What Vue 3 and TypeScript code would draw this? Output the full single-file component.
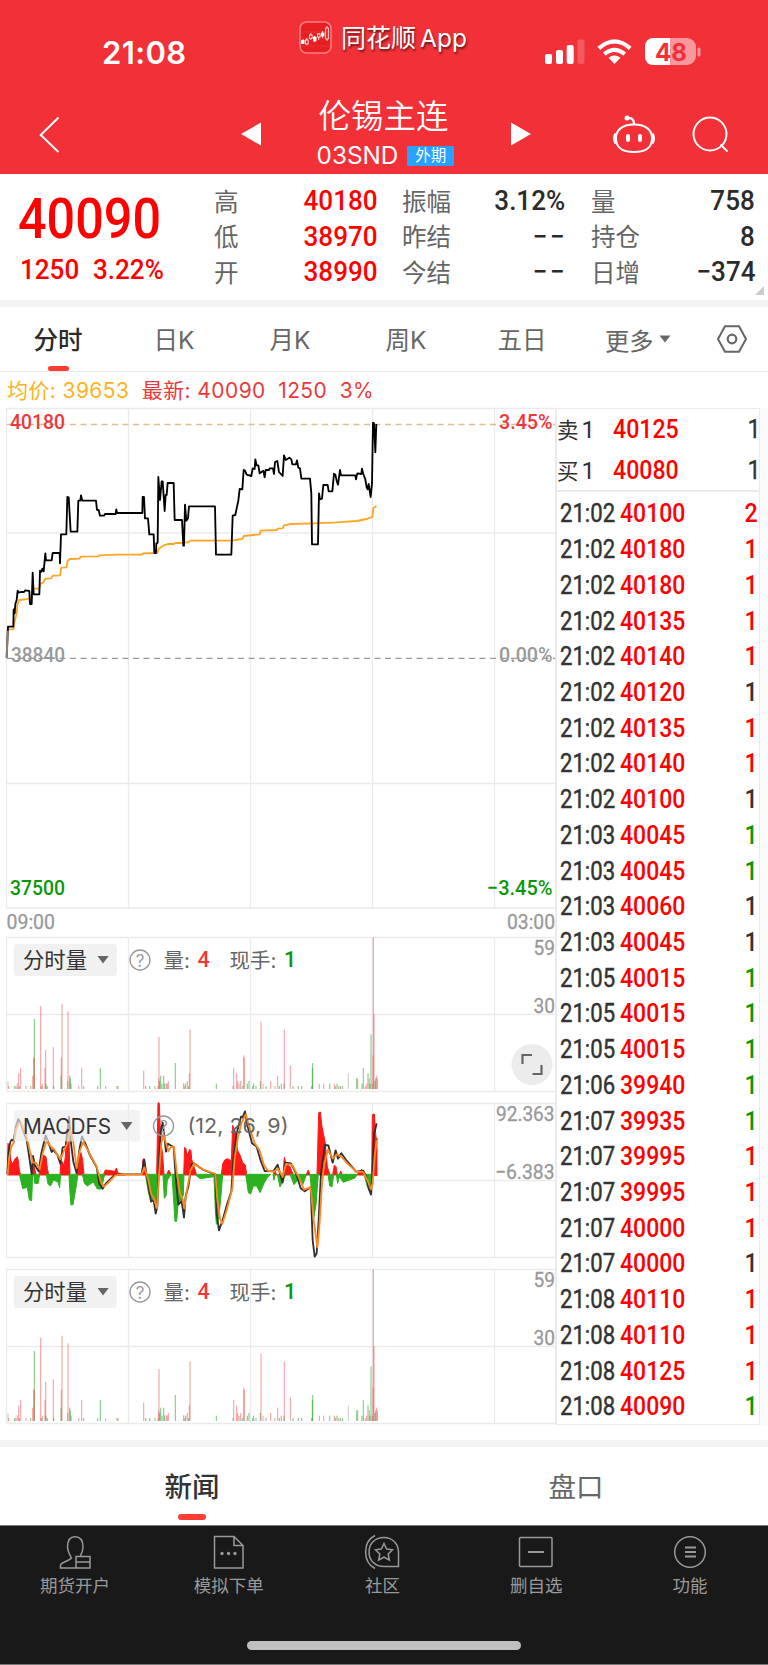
<script setup lang="ts">
interface Stat { label: string; value: string; up?: boolean }
interface Tick { time: string; price: number; qty: number; dir: 'up' | 'down' | 'flat' }
type Bar = [number, number, 'r' | 'g' | 'n']

const statColumns: Stat[][] = [
  [{ label: '高', value: '40180', up: true }, { label: '低', value: '38970', up: true }, { label: '开', value: '38990', up: true }],
  [{ label: '振幅', value: '3.12%' }, { label: '昨结', value: '−−' }, { label: '今结', value: '−−' }],
  [{ label: '量', value: '758' }, { label: '持仓', value: '8' }, { label: '日增', value: '−374' }],
]

const periods = ['分时', '日K', '月K', '周K', '五日']

const t = (time: string, price: number, dir: Tick['dir'], qty = 1): Tick => ({ time, price, qty, dir })
const ticks: Tick[] = [
  t('21:02', 40100, 'up', 2), t('21:02', 40180, 'up'), t('21:02', 40180, 'up'), t('21:02', 40135, 'up'),
  t('21:02', 40140, 'up'), t('21:02', 40120, 'flat'), t('21:02', 40135, 'up'), t('21:02', 40140, 'up'),
  t('21:02', 40100, 'flat'), t('21:03', 40045, 'down'), t('21:03', 40045, 'down'), t('21:03', 40060, 'flat'),
  t('21:03', 40045, 'flat'), t('21:05', 40015, 'down'), t('21:05', 40015, 'down'), t('21:05', 40015, 'down'),
  t('21:06', 39940, 'down'), t('21:07', 39935, 'down'), t('21:07', 39995, 'up'), t('21:07', 39995, 'up'),
  t('21:07', 40000, 'up'), t('21:07', 40000, 'flat'), t('21:08', 40110, 'up'), t('21:08', 40110, 'up'),
  t('21:08', 40125, 'up'), t('21:08', 40090, 'down'),
]

const gridX = [128.5, 250.5, 372.5, 494.5]

const priceLine = '20,772 24,680 40,680 41,628 44,640 46,612 50,600 53,572 56,578 62,576 72,576 76,571 88,573 90,612 95,612 98,518 101,583 118,583 120,512 124,515 127,506 131,514 136,460 138,481 155,481 158,459 179,459 180,490 183,403 199,403 202,291 206,292 212,395 232,395 235,302 241,302 243,286 247,302 288,302 291,330 296,330 300,347 312,347 315,342 347,342 349,328 351,339 427,339 428,291 432,291 435,355 444,355 448,403 461,403 463,459 468,459 469,430 473,428 475,231 480,300 485,244 488,244 494,333 497,285 500,285 503,249 521,249 524,360 546,360 550,437 552,437 555,314 559,362 564,355 567,319 645,319 648,464 694,464 698,347 706,345 710,325 715,302 719,267 727,268 731,210 735,212 740,224 754,228 758,205 764,207 766,178 770,196 775,196 779,220 790,212 794,232 797,210 807,210 809,205 819,205 822,222 825,186 832,183 837,216 848,228 852,166 857,180 868,173 874,178 877,193 888,193 891,181 895,203 900,205 904,236 930,236 934,280 936,433 954,433 957,280 960,298 966,296 970,255 983,255 986,274 997,274 1002,221 1006,224 1010,242 1014,254 1020,210 1023,226 1066,226 1068,238 1072,220 1084,222 1086,206 1090,222 1096,238 1100,262 1103,268 1106,252 1112,291 1116,250 1119,68 1122,70 1126,157 1129,72'
const avgLine = '24,688 40,688 44,665 50,640 52,615 58,600 92,596 100,566 118,566 122,551 130,548 136,536 154,535 158,527 180,526 184,503 199,502 203,482 210,477 238,476 243,470 295,469 300,466 350,464 425,464 430,460 472,459 476,446 492,436 505,432 522,432 526,429 550,429 553,427 565,427 570,422 695,422 727,417 731,408 779,403 782,392 830,390 834,386 848,385 852,376 872,372 940,370 1010,367 1070,363 1100,357 1114,352 1117,350 1120,324 1129,318'

const bars: Bar[] = [
  [24, 633, 'n'], [26, 648, 'r'], [44, 648, 'g'], [48, 648, 'r'], [52, 640, 'r'], [56, 610, 'r'], [58, 648, 'g'], [62, 594, 'r'],
  [78, 648, 'r'], [92, 648, 'g'], [98, 617, 'r'], [101, 563, 'r'], [103, 447, 'g'], [103, 563, 'r'], [122, 408, 'r'], [124, 648, 'g'],
  [127, 641, 'r'], [135, 594, 'r'], [137, 540, 'r'], [138, 641, 'g'], [142, 648, 'g'], [160, 532, 'r'], [161, 648, 'g'],
  [183, 617, 'g'], [184, 563, 'r'], [186, 401, 'r'], [203, 633, 'r'], [204, 424, 'r'], [209, 617, 'g'], [211, 625, 'g'], [213, 641, 'g'],
  [236, 648, 'r'], [245, 594, 'r'], [251, 648, 'g'], [293, 648, 'g'], [301, 594, 'g'], [317, 648, 'r'], [351, 648, 'g'], [354, 648, 'r'],
  [431, 602, 'r'], [437, 648, 'g'], [449, 648, 'g'], [465, 648, 'g'], [474, 648, 'r'], [476, 625, 'r'], [477, 501, 'r'], [479, 633, 'g'],
  [482, 617, 'g'], [486, 641, 'g'], [491, 617, 'g'], [494, 640, 'g'], [499, 641, 'r'], [502, 640, 'r'], [505, 633, 'r'], [526, 579, 'g'],
  [551, 640, 'g'], [554, 648, 'r'], [557, 641, 'g'], [562, 633, 'r'], [566, 648, 'g'], [568, 610, 'r'], [570, 478, 'r'],
  [649, 641, 'g'], [699, 648, 'r'], [701, 594, 'r'], [710, 610, 'r'], [713, 633, 'r'], [717, 641, 'r'], [722, 633, 'r'], [727, 648, 'g'],
  [731, 556, 'r'], [733, 563, 'r'], [742, 641, 'g'], [747, 633, 'g'], [758, 648, 'g'], [761, 641, 'g'], [768, 648, 'g'], [781, 633, 'g'],
  [783, 455, 'r'], [789, 641, 'r'], [798, 648, 'g'], [812, 633, 'r'], [825, 648, 'r'], [833, 617, 'r'], [838, 648, 'g'], [844, 641, 'g'],
  [852, 641, 'g'], [853, 478, 'r'], [871, 586, 'r'], [879, 648, 'g'], [895, 648, 'g'], [905, 648, 'g'], [935, 648, 'g'], [937, 594, 'g'],
  [938, 579, 'g'], [958, 641, 'r'], [971, 641, 'r'], [989, 641, 'g'], [1003, 641, 'r'], [1006, 648, 'g'], [1011, 641, 'g'], [1016, 648, 'r'],
  [1021, 648, 'g'], [1027, 648, 'g'], [1045, 610, 'n'], [1070, 625, 'g'], [1073, 625, 'r'], [1086, 641, 'g'], [1090, 594, 'g'], [1096, 648, 'r'],
  [1100, 641, 'r'], [1104, 610, 'g'], [1108, 625, 'r'], [1110, 641, 'g'], [1113, 493, 'g'], [1117, 641, 'r'], [1120, 202, 'r'], [1122, 432, 'r'],
  [1119, 556, 'r'], [1125, 633, 'g'], [1127, 625, 'g'], [1130, 617, 'r'], [1132, 625, 'r'],
]

const macdUp = [
  '22,255 24,160 29,170 32,210 38,222 44,208 52,200 55,212 58,240 62,255',
  '96,255 98,205 101,208 105,240 108,255', '117,255 122,205 130,196 138,200 142,235 146,255',
  '180,255 182,215 187,215 192,228 196,200 200,120 206,110 210,255', '232,255 238,195 243,188 248,210 252,255',
  '310,255 316,240 345,244 349,234 354,249 375,255', '426,255 429,208 434,208 439,255',
  '470,255 474,38 478,40 482,150 488,195 492,255', '500,255 506,240 514,255',
  '551,255 554,172 558,176 560,192 564,192 569,178 573,182 575,208 582,230 590,255',
  '664,255 668,222 674,210 682,206 694,212 698,106 703,118 708,132 712,180 720,195 728,218 736,225 740,255',
  '820,255 824,240 830,255', '849,255 853,202 858,222 870,230 880,255', '918,255 925,240 930,255',
  '951,255 956,68 961,66 966,110 970,130 976,160 982,230 990,255', '998,255 1003,225 1008,230 1012,255',
  '1018,255 1022,243 1027,255', '1070,255 1085,238 1092,255', '1115,255 1117,74 1123,72 1128,142 1131,145 1131,257',
]
const macdDown = [
  '58,253 68,296 82,292 88,330 95,332 98,253', '101,253 104,280 115,280 119,253', '139,253 144,282 152,288 160,270 174,276 179,293 182,253',
  '207,253 209,296 213,345 219,344 226,305 234,253', '247,253 253,280 262,288 280,276 292,297 304,297 314,253',
  '436,253 446,312 455,330 465,330 471,350 473,253', '489,253 493,325 498,318 502,270 514,253',
  '516,253 525,394 530,394 535,332 540,340 550,315 552,253', '585,253 600,266 642,260 646,360 649,403 656,385 662,330 668,253',
  '737,253 745,308 752,312 760,288 770,288 780,308 792,280 800,266 812,253', '819,253 822,270 826,253', '832,253 840,291 850,270 858,253',
  '870,253 882,284 895,268 908,284 920,253', '930,253 937,330 941,385 948,345 955,253', '984,253 989,287 996,291 1001,253',
  '1009,253 1013,280 1018,260 1030,277 1048,270 1065,264 1072,253', '1092,253 1102,290 1110,305 1118,253',
]
const difLine = 'M22,252 C26,170 30,150 36,149 L41,154 L47,112 L55,87 L62,100 L72,128 L80,150 L86,190 L95,252 L99,198 L104,224 L116,244 L124,190 L137,136 L146,160 L155,186 L159,180 L172,194 L181,221 L188,172 L197,170 L207,80 L213,160 L220,215 L230,250 L238,180 L246,139 L256,160 L270,196 L290,232 L298,282 L308,296 L318,280 L342,256 L358,253 L425,253 L432,208 L440,256 L453,335 L461,330 L467,371 L472,350 L478,190 L483,120 L488,98 L493,140 L498,185 L504,161 L514,167 L521,171 L526,248 L535,344 L545,334 L552,383 L557,318 L565,290 L575,224 L582,220 L610,240 L646,253 L650,370 L657,421 L668,390 L682,340 L694,305 L700,210 L710,130 L723,80 L728,82 L735,64 L742,105 L756,160 L770,170 L782,212 L794,243 L820,244 L833,224 L848,278 L856,218 L873,220 L888,250 L902,295 L914,304 L932,292 L938,450 L944,500 L950,490 L956,390 L963,250 L970,200 L975,165 L985,166 L998,218 L1007,181 L1014,206 L1024,190 L1040,212 L1068,245 L1090,242 L1099,260 L1106,295 L1113,314 L1117,255 L1122,130 L1125,122 L1130,100'
const deaLine = 'M23,255 L27,205 L34,170 L41,158 L48,118 L57,98 L65,104 L80,140 L90,185 L99,218 L108,218 L119,238 L128,190 L140,152 L151,168 L162,178 L181,208 L193,180 L202,160 L210,119 L219,150 L230,235 L240,180 L250,156 L262,178 L290,230 L302,274 L312,290 L324,279 L345,257 L358,254 L425,254 L433,232 L445,270 L453,311 L461,324 L471,355 L478,240 L484,160 L490,132 L498,160 L505,184 L513,170 L522,172 L530,245 L540,312 L548,326 L553,355 L559,310 L572,240 L582,221 L608,238 L646,252 L652,330 L660,385 L667,402 L680,360 L697,295 L704,205 L714,140 L725,97 L737,73 L748,110 L764,160 L778,180 L792,226 L805,243 L823,244 L834,236 L848,261 L858,222 L876,224 L898,265 L912,299 L932,292 L941,390 L952,472 L958,410 L966,280 L973,220 L984,179 L998,206 L1010,193 L1024,200 L1042,220 L1068,244 L1090,246 L1102,270 L1113,298 L1118,280 L1124,200 L1130,150'

const navItems = ['期货开户', '模拟下单', '社区', '删自选', '功能']
</script>

<template>
  <div class="page">
    <header class="top">
      <div class="status">
        <span class="clock">21:08</span>
        <div class="app-mark">
          <svg width="33" height="33" viewBox="0 0 33 33">
            <rect x="1" y="1" width="31" height="31" rx="6.5" fill="#e51f22" stroke="#fa7f82" stroke-width="1.5" />
            <path d="M2 11H31M2 17H31M2 25H31" stroke="#f04044" stroke-width=".6" />
            <g stroke="#fff" stroke-width=".8" fill="none">
              <path d="M4 18v5M7.800 17v7M11.800 12v7M15.700 15v6M19.700 12v7M23.700 10v7M28 5v15" />
              <g fill="#e51f22"><rect x="6.500" y="19" width="2.600" height="4" /><rect x="10.500" y="14" width="2.600" height="3.500" /><rect x="18.500" y="13" width="2.600" height="3" /><rect x="26.700" y="7" width="2.600" height="11" /></g>
              <g fill="#fff"><rect x="2.500" y="19.500" width="2.600" height="3" /><rect x="14.400" y="16" width="2.600" height="4" /><rect x="22.400" y="12" width="2.600" height="3" /></g>
            </g>
          </svg>
          <span>同花顺</span><span class="app-word">App</span>
        </div>
        <svg class="signals" width="160" height="30" viewBox="542 37 160 30">
          <g fill="#fff">
            <rect x="545" y="54" width="7" height="10" rx="2" /><rect x="556" y="50" width="7" height="14" rx="2" />
            <rect x="566.700" y="45" width="7" height="19" rx="2" /><rect x="577.500" y="39.500" width="7" height="24.500" rx="2" opacity=".2" />
            <path d="M608.500 57.800L614.500 64L620.500 57.800Q614.500 53 608.500 57.800Z" />
            <rect x="697.500" y="47.500" width="3" height="9" rx="1.500" opacity=".5" />
            <rect x="645" y="38" width="51" height="27" rx="9" opacity=".5" />
            <path d="M670 38H654Q645 38 645 47V56Q645 65 654 65H670Z" />
          </g>
          <path d="M598.800 48.300Q614.500 34.500 630.200 48.300M604.300 54.200Q614.500 45.500 624.700 54.200" fill="none" stroke="#fff" stroke-width="4.200" />
          <text x="671" y="60.500" text-anchor="middle" class="charge">48</text>
        </svg>
      </div>
      <div class="titlebar">
        <svg class="back" width="24" height="40" viewBox="38 115 24 40"><path d="M58.500 117.500L40.700 135L58.500 152" fill="none" stroke="#fff" stroke-width="2" /></svg>
        <svg class="prev" width="22" height="26" viewBox="240 121 22 26"><path d="M241 134L261 122.500V145.500Z" fill="#fff" /></svg>
        <div class="name">
          <div class="cn">伦锡主连</div>
          <div class="code"><span>03SND</span><span class="badge">外期</span></div>
        </div>
        <svg class="next" width="22" height="26" viewBox="510 121 22 26"><path d="M531 134L511 122.500V145.500Z" fill="#fff" /></svg>
        <svg class="robot" width="46" height="42" viewBox="611 113 46 42">
          <g fill="none" stroke="#fff" stroke-width="2">
            <path d="M634 124.500C647 124.500 652 131 652 138C652 148 646 152 634 152S616 148 616 138C616 131 621 124.500 634 124.500Z" />
            <path d="M628 118Q634 117.500 634 124" stroke-width="2.400" /><path d="M615.800 133.500Q612.500 138 615.800 143.500M652.200 133.500Q655.500 138 652.200 143.500" stroke-width="2.500" />
          </g>
          <g fill="#fff"><circle cx="627" cy="118" r="2.500" /><rect x="626" y="134" width="4" height="8" rx="2" /><rect x="638" y="134" width="4" height="8" rx="2" /></g>
        </svg>
        <svg class="find" width="40" height="40" viewBox="691 115 40 40"><circle cx="710" cy="134" r="16.500" fill="none" stroke="#fff" stroke-width="2" /><path d="M720.500 144.500L727.500 151.500" stroke="#fff" stroke-width="2" /></svg>
      </div>
    </header>

    <section class="quote">
      <div class="last">
        <div class="big"><span class="din">40090</span></div>
        <div class="chg"><span class="din">1250</span><span class="din">3.22%</span></div>
      </div>
      <div v-for="(col, i) in statColumns" :key="i" class="col" :class="'c' + i">
        <div v-for="s in col" :key="s.label" class="stat">
          <span>{{ s.label }}</span><b class="din" :class="{ up: s.up, dash: s.value === '−−' }">{{ s.value }}</b>
        </div>
      </div>
      <i class="fold" />
    </section>

    <nav class="periods">
      <span v-for="(p, i) in periods" :key="p" class="period" :class="{ on: i === 0 }">{{ p }}</span>
      <span class="more">更多<svg width="12" height="8" viewBox="0 0 12 8"><path d="M.5 .5H11.500L6 7.500Z" fill="#666" /></svg></span>
      <svg class="gear" width="32" height="30" viewBox="0 0 32 30"><path d="M9 2.200H23L30 15L23 27.800H9L2 15Z" fill="none" stroke="#666" stroke-width="2" /><circle cx="16" cy="15" r="4.300" fill="none" stroke="#666" stroke-width="2.200" /></svg>
    </nav>

    <div class="legend">
      <span class="avg">均价: 39653</span><span>最新: 40090</span><span>1250</span><span>3%</span>
    </div>

    <main class="board">
      <div class="charts">
        <svg width="556" height="529" viewBox="0 408 556 529">
          <g class="grid">
            <path d="M6.500 908V408.500H556M6.500 908H556M6.500 533H556M6.500 783.500H556" />
            <path v-for="x in gridX" :key="x" :d="`M${x} 408V908`" />
          </g>
          <path d="M7 424.500H556" stroke="#e3bd8c" stroke-width="1.300" stroke-dasharray="6 4.500" />
          <path d="M7 658.300H556" stroke="#999" stroke-width="1.300" stroke-dasharray="6 4.500" />
          <g transform="translate(0 400) scale(.33333)" fill="none" stroke-linejoin="round">
            <polyline :points="avgLine" stroke="#ffa526" stroke-width="5.500" />
            <polyline :points="priceLine" stroke="#000" stroke-width="5.500" />
            <path d="M20,775L23,692" stroke="#8d8175" stroke-width="6" />
          </g>
          <g class="axis">
            <text x="10" y="428.700" textLength="55" lengthAdjust="spacingAndGlyphs" class="strong" fill="#f0363b">40180</text>
            <text x="499" y="428.700" textLength="53.500" lengthAdjust="spacingAndGlyphs" class="strong" fill="#f0363b">3.45%</text>
            <text x="11" y="661.700" textLength="54" lengthAdjust="spacingAndGlyphs" class="strong">38840</text>
            <text x="499" y="661.700" textLength="53.500" lengthAdjust="spacingAndGlyphs" class="strong">0.00%</text>
            <text x="10" y="894.700" textLength="55" lengthAdjust="spacingAndGlyphs" class="strong" fill="#0a980a">37500</text>
            <text x="487" y="894.700" textLength="65.500" lengthAdjust="spacingAndGlyphs" class="strong" fill="#0a980a">−3.45%</text>
            <text x="6.500" y="929" textLength="48.500" lengthAdjust="spacingAndGlyphs">09:00</text>
            <text x="507" y="929" textLength="48" lengthAdjust="spacingAndGlyphs">03:00</text>
          </g>
        </svg>

        <template v-for="pane in ['volume', 'macd', 'volume-2']" :key="pane">
          <svg v-if="pane !== 'macd'" width="556" height="166" viewBox="0 0 556 166">
            <g class="grid">
              <path d="M6.500 .5H556M6.500 77.500H556M6.500 154.500H556M6.500 .5V154.500" />
              <path v-for="x in gridX" :key="x" :d="`M${x} 0V154`" />
            </g>
            <g transform="translate(0 -67) scale(.33333)">
              <rect v-for="(b, i) in bars" :key="i" :x="b[0] - 1.700" :y="b[1]" width="3.400" :height="657 - b[1]" :class="'bar-' + b[2]" />
            </g>
            <rect x="13.700" y="7" width="103" height="32" rx="3" fill="#f1f1f1" />
            <text x="23" y="30.800" textLength="64" class="tag">分时量</text>
            <path d="M97.500 19H108.700L103 26.500Z" fill="#666" />
            <circle cx="140" cy="23" r="10" class="help" /><text x="140" y="29.500" text-anchor="middle" class="mark">?</text>
            <text x="163.500" y="30.500" class="info">量:</text><text x="197.500" y="30" class="num" fill="#f0363b">4</text>
            <text x="229.500" y="30.500" class="info">现手:</text><text x="284" y="30" class="num" fill="#0a980a">1</text>
            <g class="axis">
              <text x="533.500" y="18" textLength="21.500" lengthAdjust="spacingAndGlyphs">59</text>
              <text x="533.500" y="76" textLength="21.500" lengthAdjust="spacingAndGlyphs">30</text>
            </g>
            <g v-if="pane === 'volume'">
              <circle cx="532" cy="127.500" r="20.500" fill="#ececec" />
              <path d="M522.500 127V118H532M541.500 128V137H532.500" fill="none" stroke="#666" stroke-width="2.200" />
            </g>
          </svg>
          <svg v-else width="556" height="166" viewBox="0 0 556 166">
            <g class="grid">
              <path d="M6.500 .5H556M6.500 77.500H556M6.500 154.500H556M6.500 .5V154.500" />
              <path v-for="x in gridX" :key="x" :d="`M${x} 0V154`" />
            </g>
            <g transform="translate(0 -13) scale(.33333)">
              <polygon v-for="p in macdUp" :key="p" :points="p" fill="#ff1818" stroke="#ff1818" stroke-width="3" />
              <polygon v-for="p in macdDown" :key="p" :points="p" fill="#2cb120" stroke="#2cb120" stroke-width="3" />
              <g fill="none" stroke-width="5.500" stroke-linejoin="round"><path :d="difLine" stroke="#303030" /><path :d="deaLine" stroke="#ff861f" /></g>
            </g>
            <rect x="13.700" y="7" width="126.500" height="31.500" rx="3" fill="#ededed" fill-opacity=".65" />
            <text x="23" y="30.500" textLength="88" lengthAdjust="spacingAndGlyphs" class="tag">MACDFS</text>
            <path d="M121 19H132.500L126.700 27Z" fill="#666" />
            <circle cx="163.500" cy="23" r="10" class="help" /><text x="163.500" y="29.500" text-anchor="middle" class="mark">?</text>
            <text x="187.500" y="30.300" textLength="101" lengthAdjust="spacingAndGlyphs" class="info">(12, 26, 9)</text>
            <g class="axis">
              <text x="496" y="18" textLength="58.500" lengthAdjust="spacingAndGlyphs">92.363</text>
              <text x="495" y="76" textLength="59.500" lengthAdjust="spacingAndGlyphs">−6.383</text>
            </g>
          </svg>
        </template>
      </div>

      <aside class="book">
        <div class="level"><span>卖<em>1</em></span><b class="din">40125</b><i class="din">1</i></div>
        <div class="level"><span>买<em>1</em></span><b class="din">40080</b><i class="din">1</i></div>
        <div class="ticks">
          <div v-for="(k, i) in ticks" :key="i" class="tick">
            <span class="din">{{ k.time }}</span><b class="din">{{ k.price }}</b><i class="din" :class="k.dir">{{ k.qty }}</i>
          </div>
        </div>
      </aside>
    </main>

    <div class="subtabs"><span class="on">新闻</span><span>盘口</span></div>

    <footer class="dock">
      <div class="items">
        <div v-for="(n, i) in navItems" :key="n" class="item">
          <svg width="38" height="38" viewBox="0 0 38 38" fill="none" stroke="#999" stroke-width="1.500">
            <template v-if="i === 0">
              <path d="M11.500 14C11.500 7 14 3.700 19 3.700S27 7 27 14C27 18 25.500 20.500 24 24M11.500 14C11.500 19 14 22 15.500 25C13 28 4.500 29.500 4.500 32V35H34V23.500H20V35M20 29H34" />
            </template>
            <template v-else-if="i === 1">
              <path d="M4.500 3.500H24L33 12.500V35H4.500ZM24 3.500V12.500H33" /><g fill="#999" stroke="none"><circle cx="12" cy="20.500" r="1.700" /><circle cx="18.500" cy="20.500" r="1.700" /><circle cx="25" cy="20.500" r="1.700" /></g>
            </template>
            <template v-else-if="i === 2">
              <path d="M12 2.500C-.5 9 -.5 29 12 35.500M21 4.500C11 4.500 6 11.500 6 19S11 33.500 21 33.500H35.500V19C35.500 11.500 30 4.500 21 4.500Z" /><path d="M21 10.500L23.700 16L29.500 16.800L25.200 21L26.300 27L21 24.200L15.700 27L16.800 21L12.500 16.800L18.300 16Z" />
            </template>
            <template v-else-if="i === 3"><rect x="2.500" y="4.500" width="32.500" height="29" rx="1" /><path d="M11 19H27" stroke-width="2" /></template>
            <template v-else><circle cx="19" cy="19" r="15.300" /><path d="M14 14.500H25M14 19H25M14 23.500H25" stroke-width="1.800" /></template>
          </svg>
          <span>{{ n }}</span>
        </div>
      </div>
      <div class="home" />
    </footer>
  </div>
</template>

<style>
body { margin: 0; background: #fff; }
</style>

<style scoped>
.page { width: 768px; height: 1665px; overflow: hidden; background: #fff; font-family: Inter, "Noto Sans CJK SC", sans-serif; color: #333; }
.page svg { display: block; flex: none; }
.charts svg { overflow: visible; }
.din { display: inline-block; font-family: Roboto, "Noto Sans", sans-serif; font-weight: 500; font-style: normal; transform: scaleX(.93); white-space: nowrap; }
.top { height: 174px; background: #f23038; color: #fff; }
.status { height: 90px; display: flex; }
.clock { box-sizing: border-box; width: 299px; padding: 34px 0 0 102px; font-size: 31px; line-height: 38px; font-weight: 600; letter-spacing: .4px; }
.app-mark { width: 243px; display: flex; padding-top: 21px; height: 34px; font-size: 25px; line-height: 34px; text-shadow: 1px 2px 2px #6b1818; }
.app-mark svg { margin-right: 9px; }
.app-mark span { white-space: nowrap; }
.app-word { margin-left: 4px; font-size: 24.500px; }
.signals { margin: 37px 0 0; }
.charge { font: 700 24px Inter, sans-serif; fill: #f23038; }
.titlebar { height: 84px; display: flex; align-items: flex-start; }
.back { margin: 25px 0 0 38px; }
.prev { margin: 31px 0 0 178px; }
.name { width: 248px; text-align: center; }
.cn { font-size: 32.500px; line-height: 36px; padding: 9px 5px 0 0; font-weight: 350; }
.code { display: flex; justify-content: center; align-items: center; gap: 9px; height: 26px; margin-top: 7px; padding-right: 1px; }
.code > span:first-child { font-size: 24.300px; line-height: 26px; }
.badge { width: 47px; height: 20px; background: #2aa1ff; border-radius: 1px; font-size: 15.500px; line-height: 20px; margin-top: 1px; }
.next { margin: 31px 0 0; }
.robot { margin: 23px 0 0 79px; }
.find { margin: 25px 0 0 34px; }
.quote { position: relative; box-sizing: border-box; height: 133px; border-bottom: 7px solid #f4f4f4; display: flex; }
.last { width: 214px; color: #f00; }
.big { height: 74px; padding: 8px 0 0 18px; box-sizing: border-box; font-size: 55px; line-height: 72px; }
.big .din, .chg .din { transform-origin: left; }
.big .din { transform: scaleX(.915); }
.chg { display: flex; padding: 3px 0 0 20px; font-size: 28px; line-height: 37px; gap: 9px; }
.chg .din { transform: scaleX(.93); }
.col { padding-top: 9px; box-sizing: border-box; }
.stat { height: 35.500px; display: flex; justify-content: space-between; align-items: center; font-size: 24.500px; color: #666; white-space: nowrap; }
.stat > span { margin-top: -1px; }
.stat .din { font-size: 28px; color: #2b2b2b; transform-origin: right; }
.stat .dash { letter-spacing: 3px; margin-right: -2px; }
.stat .up { color: #f00; }
.c0 { width: 163.500px; }
.c1 { width: 163.500px; margin-left: 24.500px; }
.c2 { width: 164px; margin-left: 25.500px; }
.fold { position: absolute; right: 4px; bottom: 5px; border-left: 9px solid transparent; border-bottom: 9px solid #ccc; }
.periods { height: 64px; border-bottom: 1px solid #ebebeb; display: flex; align-items: center; font-size: 24.500px; color: #666; }
.period { position: relative; width: 116px; height: 64px; text-align: center; line-height: 66px; }
.period.on { font-weight: 500; color: #2b2b2b; }
.on::after { content: ""; position: absolute; background: #fd3c34; border-radius: 3px; width: 21px; height: 5px; left: 50%; bottom: 0; margin-left: -10px; }
.more { display: flex; align-items: center; gap: 5px; margin-left: 25px; width: 67px; white-space: nowrap; font-size: 24.300px; }
.gear { margin-left: 44px; }
.legend { height: 36px; display: flex; padding-left: 7px; font-size: 21px; line-height: 37px; letter-spacing: .4px; color: #ec393c; gap: 12.500px; white-space: pre; }
.legend .avg { color: #fcb322; }
.board { display: flex; height: 1032px; border-bottom: 7px solid #f4f4f4; }
.charts { width: 555px; }
.grid { fill: none; stroke: #ebebeb; stroke-width: 1.300; }
.axis text { font: 400 21px Roboto, sans-serif; stroke-width: .3; stroke: #999; }
.axis text:not([fill]) { fill: #999; }
.axis .strong { font-weight: 500; font-size: 21px; stroke: none; }
.bar-r { fill: #f44a50; fill-opacity: .5; }
.bar-g { fill: #27a02b; fill-opacity: .55; }
.bar-n { fill: #bbb; fill-opacity: .7; }
.tag { font-size: 21.300px; fill: #333; }
.info { font-size: 20.500px; fill: #666; }
.num { font: 500 21.500px Roboto, sans-serif; }
.help { fill: none; stroke: #999; stroke-width: 1.400; }
.mark { font-size: 17px; fill: #999; }
.book { box-sizing: border-box; width: 205px; height: 1017px; border: solid #ebebeb; border-width: 1px 1px 1px 2px; box-shadow: 8px 0 0 #fafafa; }
.level { height: 41px; display: grid; grid-template-columns: 56px 1fr auto; align-items: center; font-size: 21.500px; line-height: 38px; box-sizing: border-box; }
.level em { font-style: normal; font-family: Roboto, sans-serif; font-size: 24px; margin-left: 3px; }
.level b, .tick b { color: #f00; font-size: 25px; transform-origin: left; }
.level b { transform: scaleX(.925); }
.tick b { transform: scaleX(.92); }
.level i { font-size: 25px; font-weight: 400; margin-right: -2px; -webkit-text-stroke: .3px #333; }
.ticks { border-top: 2px solid #ebebeb; padding-top: 4px; margin-top: -1px; }
.tick { height: 35.720px; display: grid; grid-template-columns: 60px 1fr auto; align-items: center; padding: 0 1px 0 3px; }
.tick span { font-size: 25px; font-weight: 400; -webkit-text-stroke: .45px #333; transform: scaleX(.885); transform-origin: left; }
.tick i { font-size: 25px; }
.tick .up { color: #f00; }
.tick .down { color: #0a980a; }
.subtabs { height: 78px; display: grid; grid-template-columns: 1fr 1fr; text-align: center; font-size: 27.500px; line-height: 80px; color: #666; }
.subtabs span { position: relative; }
.subtabs .on { color: #333; font-weight: 500; }
.subtabs .on::after { width: 28px; bottom: 7px; margin-left: -14px; height: 6px; }
.dock { height: 140px; box-sizing: border-box; background: #191919; border-top: 1px solid #777; border-bottom: 1px solid #777; color: #999; }
.items { display: grid; grid-template-columns: repeat(5, 1fr); padding-top: 7px; margin: 0 1px 0 -2px; height: 108px; box-sizing: border-box; }
.item { display: flex; flex-direction: column; align-items: center; font-size: 17.500px; line-height: 26px; }
.item span { margin-top: 2px; }
.home { width: 274px; height: 9px; margin: 7px auto 0; border-radius: 5px; background: #c0c0c0; }
</style>
